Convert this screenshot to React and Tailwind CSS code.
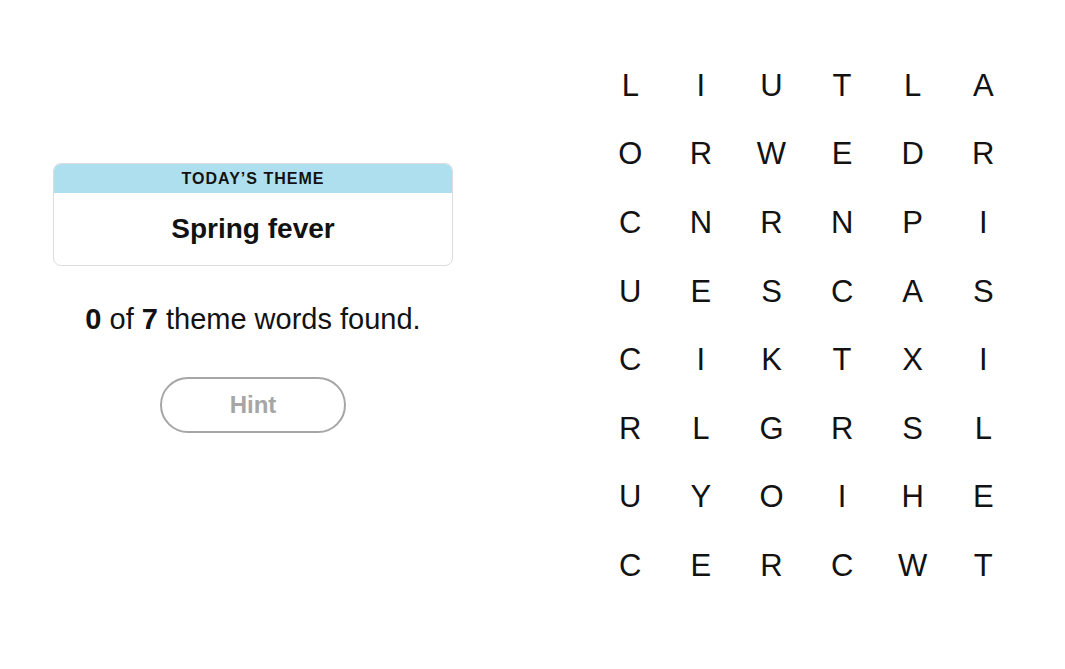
import React from "react";

const rows = [
  "LIUTLA",
  "ORWEDR",
  "CNRNPI",
  "UESCAS",
  "CIKTXI",
  "RLGRSL",
  "UYOIHE",
  "CERCWT",
];

export default function App() {
  return (
    <div className="w-[1065px] h-[669px] bg-white flex text-[#121212]" style={{ fontFamily: '"Liberation Sans", Arial, sans-serif' }}>
      <div className="ml-[53px] pt-[163px] w-[400px] flex flex-col items-center">
        <div className="w-[400px] border border-[#dcdcdc] rounded-lg overflow-hidden">
          <div className="h-[29px] bg-[#aedfee] flex items-center justify-center text-[16px] font-bold tracking-[1px] leading-none">
            TODAY’S THEME
          </div>
          <div className="h-[72px] flex items-center justify-center text-[28px] font-bold leading-none">
            Spring fever
          </div>
        </div>
        <div className="mt-[37px] h-[32px] flex items-center text-[29px] leading-none">
          <span><b>0</b> of <b>7</b> theme words found.</span>
        </div>
        <button className="mt-[42px] w-[186px] h-[56px] rounded-full border-2 border-[#a6a6a6] text-[#a6a6a6] text-[24px] font-bold flex items-center justify-center">
          Hint
        </button>
      </div>
      <div className="ml-[142px] pt-[51px]">
        <div className="grid grid-cols-[repeat(6,70.6px)] auto-rows-[68.6px]">
          {rows.flatMap((r, i) =>
            r.split("").map((c, j) => (
              <div key={i + "-" + j} className="flex items-center justify-center text-[31px] leading-none">
                {c}
              </div>
            ))
          )}
        </div>
      </div>
    </div>
  );
}
